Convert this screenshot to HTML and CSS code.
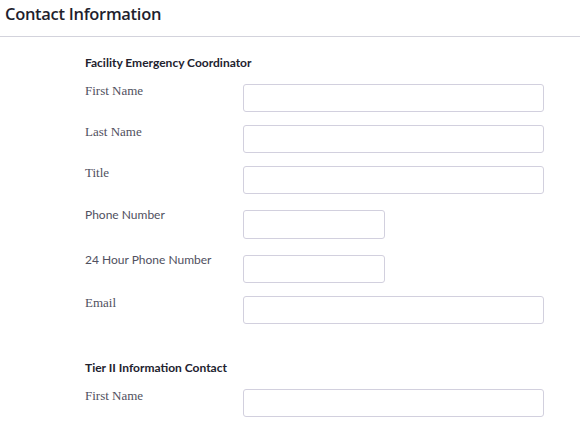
FILE: index.html
```html
<!DOCTYPE html>
<html>
<head>
<meta charset="utf-8">
<link rel="stylesheet" href="styles.css">
</head>
<body>
<header class="page-header">
  <h1 class="page-title">Contact Information</h1>
</header>
<main class="form">
  <section class="group">
    <h2 class="group-title">Facility Emergency Coordinator</h2>
    <div class="row"><label class="label serif">First Name</label><input class="field" type="text"></div>
    <div class="row"><label class="label serif">Last Name</label><input class="field" type="text"></div>
    <div class="row"><label class="label serif">Title</label><input class="field" type="text"></div>
    <div class="row row-phone"><label class="label sans">Phone Number</label><input class="field short tall" type="text"></div>
    <div class="row"><label class="label sans">24 Hour Phone Number</label><input class="field short" type="text"></div>
    <div class="row"><label class="label serif">Email</label><input class="field" type="text"></div>
  </section>
  <section class="group group-second">
    <h2 class="group-title">Tier II Information Contact</h2>
    <div class="row"><label class="label serif">First Name</label><input class="field" type="text"></div>
  </section>
</main>
</body>
</html>
```
FILE: styles.css
```css
html, body {
  margin: 0;
  padding: 0;
  background: #ffffff;
}
body {
  font-family: Lato, "Open Sans", sans-serif;
  color: #2a2a3a;
}
.page-header {
  height: 36px;
  border-bottom: 1px solid #d3d3dc;
  padding-left: 5px;
}
.page-title {
  margin: 0;
  padding-top: 3px;
  font-family: "Open Sans", Lato, sans-serif;
  font-weight: 600;
  font-size: 16.5px;
  line-height: 22px;
  color: #1f1f2e;
  letter-spacing: -0.3px;
}
.form {
  padding-left: 85px;
  width: 459px;
}
.group-title {
  margin: 0;
  padding-top: 19px;
  font-family: Lato, sans-serif;
  font-weight: 700;
  font-size: 12px;
  line-height: 14px;
  color: #22222e;
  height: 14px;
  margin-bottom: 14px;
}
.row {
  display: grid;
  grid-template-columns: 158px 1fr;
  align-items: start;
  margin-bottom: 13px;
}
.row-phone {
  margin-top: 16px;
  margin-bottom: 16px;
}
.label {
  color: #505060;
  font-size: 12px;
  line-height: 16px;
}
.serif {
  font-family: "Liberation Serif", serif;
  font-size: 13px;
  margin-top: -1px;
}
.sans {
  font-family: Lato, sans-serif;
  font-size: 12px;
  margin-top: -3px;
}
.field {
  box-sizing: border-box;
  height: 28px;
  width: 301px;
  border: 1px solid #d2d0de;
  border-radius: 3px;
  background: #fff;
  margin: 0;
  padding: 0 6px;
}
.field.short {
  width: 142px;
}
.field.tall {
  height: 29px;
}
.group-second .group-title {
  padding-top: 24px;
  margin-bottom: 14px;
}
```
